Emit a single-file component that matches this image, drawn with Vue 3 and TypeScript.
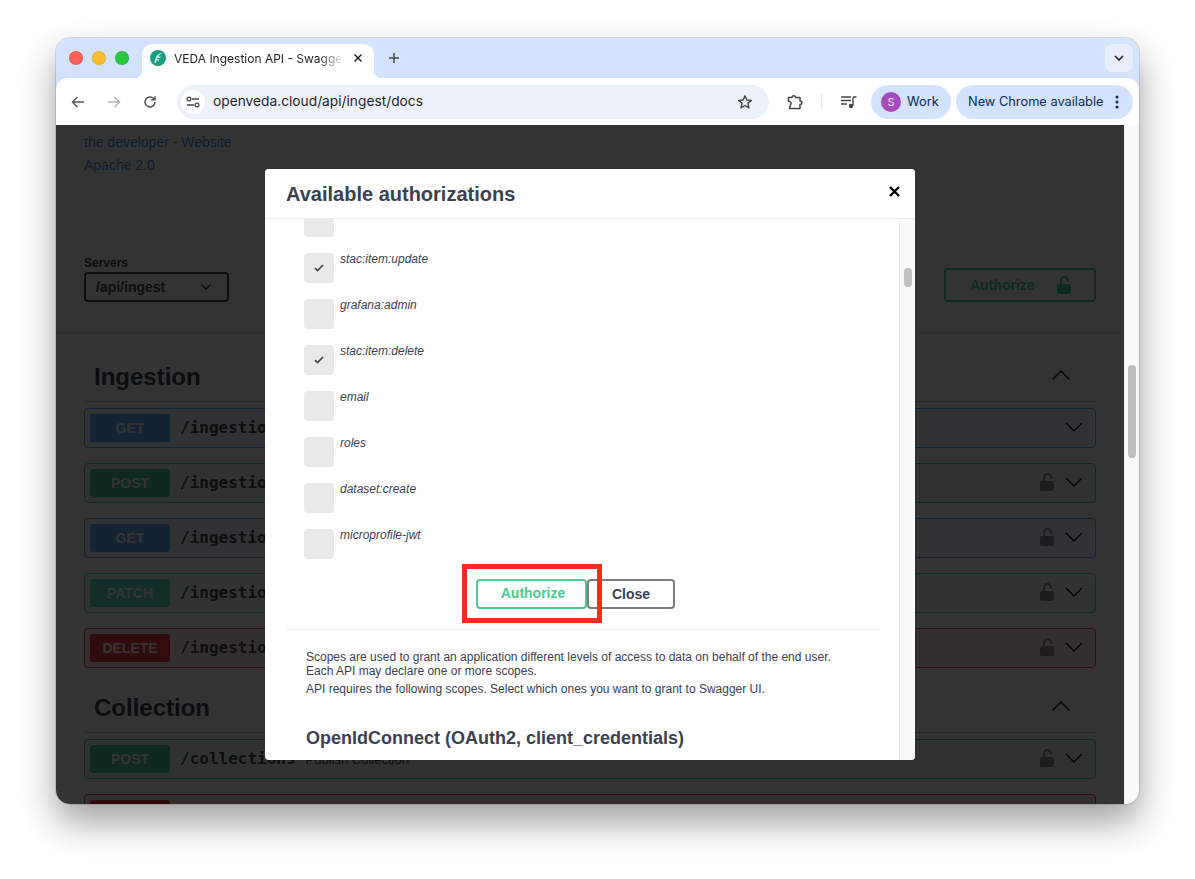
<script setup lang="ts">
interface Op { method: string; path: string; summary: string; lock: boolean }
const ingestion: Op[] = [
  { method: 'GET', path: '/ingestions', summary: 'List Ingestions', lock: false },
  { method: 'POST', path: '/ingestions', summary: 'Enqueue Ingestion', lock: true },
  { method: 'GET', path: '/ingestions/{id}', summary: 'Get Ingestion', lock: true },
  { method: 'PATCH', path: '/ingestions/{id}', summary: 'Update Ingestion', lock: true },
  { method: 'DELETE', path: '/ingestions/{id}', summary: 'Cancel Ingestion', lock: true },
]
const collection: Op[] = [
  { method: 'POST', path: '/collections', summary: 'Publish Collection', lock: true },
  { method: 'DELETE', path: '/collections/{id}', summary: 'Delete Collection', lock: true },
]
const scopes = [
  { name: '', on: false },
  { name: 'stac:item:update', on: true },
  { name: 'grafana:admin', on: false },
  { name: 'stac:item:delete', on: true },
  { name: 'email', on: false },
  { name: 'roles', on: false },
  { name: 'dataset:create', on: false },
  { name: 'microprofile-jwt', on: false },
]
const sections = [
  { title: 'Ingestion', ops: ingestion },
  { title: 'Collection', ops: collection },
]
</script>

<template>
  <div class="stage">
    <div class="window">
      <div class="tabstrip">
        <div class="lights">
          <span class="light red"></span><span class="light yellow"></span><span class="light green"></span>
        </div>
        <div class="tab">
          <svg class="fav" width="16" height="16" viewBox="0 0 16 16">
            <circle cx="8" cy="8" r="8" fill="#1b9c85" />
            <path d="M12.4 3C8.8 3.3 6.4 5.4 5.6 8.4L4.4 12.8L5.6 13L6.4 10.4H8.8L9.4 9.2H6.8L7.2 7.8H10.2L10.8 6.6H7.7C8.4 5.4 10 4.2 12.4 3Z" fill="#fff" />
          </svg>
          <span class="tabtitle">VEDA Ingestion API - Swagger UI</span>
          <svg class="tabclose" width="10" height="10" viewBox="0 0 10 10"><path d="M1.5 1.5L8.5 8.5M8.5 1.5L1.5 8.5" stroke="#1f1f1f" stroke-width="1.5" /></svg>
        </div>
        <svg class="plus" width="12" height="12" viewBox="0 0 12 12"><path d="M6 1V11M1 6H11" stroke="#444" stroke-width="1.4" /></svg>
        <div class="tabmenu">
          <svg width="10" height="6" viewBox="0 0 10 6"><path d="M1 1L5 5L9 1" fill="none" stroke="#1f1f1f" stroke-width="1.6" /></svg>
        </div>
      </div>

      <div class="toolbar">
        <svg class="nav" width="16" height="16" viewBox="0 0 16 16"><path d="M14 8H2.5M7.5 3L2.5 8L7.5 13" fill="none" stroke="#555" stroke-width="1.5" /></svg>
        <svg class="nav" width="16" height="16" viewBox="0 0 16 16"><path d="M2 8H13.5M8.5 3L13.5 8L8.5 13" fill="none" stroke="#b0b0b0" stroke-width="1.5" /></svg>
        <svg class="nav last" width="16" height="16" viewBox="0 0 16 16"><path d="M13 8A5 5 0 1 1 11.4 4.3L13 5.8M13 2.2V5.8H9.4" fill="none" stroke="#555" stroke-width="1.5" /></svg>
        <div class="address">
          <span class="siteicon">
            <svg width="14" height="12" viewBox="0 0 14 12"><path d="M6 3H13M1 9H8" stroke="#444" stroke-width="1.3" /><circle cx="3" cy="3" r="1.9" fill="none" stroke="#444" stroke-width="1.2" /><circle cx="11" cy="9" r="1.9" fill="none" stroke="#444" stroke-width="1.2" /></svg>
          </span>
          <span class="url">openveda.cloud/api/ingest/docs</span>
          <svg class="star" width="16" height="16" viewBox="0 0 16 16"><path d="M8 1.8L9.8 6L14.4 6.4L10.9 9.4L12 13.9L8 11.5L4 13.9L5.1 9.4L1.6 6.4L6.2 6Z" fill="none" stroke="#444" stroke-width="1.4" stroke-linejoin="round" /></svg>
        </div>
        <svg class="puzzle" width="18" height="18" viewBox="0 0 18 18"><path d="M2.5 4.5H6C6 2 9.5 2 9.5 4.5H14V8C16.5 8 16.5 11.5 14 11.5V15.5H3.5L4.5 12C6 10.5 4.5 8 2.5 8.2Z" fill="none" stroke="#444" stroke-width="1.5" stroke-linejoin="round" /></svg>
        <span class="sep"></span>
        <svg class="media" width="16" height="14" viewBox="0 0 16 14"><path d="M0 2H10M0 5.5H10M0 9H6" stroke="#444" stroke-width="1.3" /><path d="M12 2.2V10.5" stroke="#444" stroke-width="1.4" /><path d="M12 2H15.5" stroke="#444" stroke-width="1.5" /><circle cx="10" cy="11" r="2.2" fill="#444" /></svg>
        <div class="pill work"><span class="avatar">S</span><span class="pilltext">Work</span></div>
        <div class="pill update">
          <span class="pilltext">New Chrome available</span>
          <svg width="4" height="14" viewBox="0 0 4 14"><circle cx="2" cy="2" r="1.5" fill="#0b2a55" /><circle cx="2" cy="7" r="1.5" fill="#0b2a55" /><circle cx="2" cy="12" r="1.5" fill="#0b2a55" /></svg>
        </div>
      </div>

      <div class="viewport">
        <div class="page">
          <div class="info">
            <a>the developer - Website</a>
            <a>Apache 2.0</a>
          </div>
          <div class="schemes">
            <div>
              <div class="serverlabel">Servers</div>
              <div class="select">
                <span>/api/ingest</span>
                <svg width="12" height="8" viewBox="0 0 12 8"><path d="M1.5 1.5L6 6L10.5 1.5" fill="none" stroke="#3b4151" stroke-width="1.6" /></svg>
              </div>
            </div>
            <div class="authbtn">
              <span>Authorize</span>
              <svg width="14" height="18" viewBox="0 0 14 18"><path d="M4 8.5V4.5A3.5 3.5 0 0 1 11 4.5V5.6" fill="none" stroke="#49cc90" stroke-width="2" /><rect y="8" width="14" height="10" rx="2" fill="#49cc90" /></svg>
            </div>
          </div>
          <div class="ops">
            <section v-for="s in sections" :key="s.title" class="tag">
              <div class="taghead">
                <h3>{{ s.title }}</h3>
                <svg width="20" height="10" viewBox="0 0 20 10"><path d="M1.5 9.5L10 1L18.5 9.5" fill="none" stroke="#000" stroke-width="1.3" /></svg>
              </div>
              <div v-for="(op, i) in s.ops" :key="i" class="op" :class="op.method.toLowerCase()">
                <span class="badge">{{ op.method }}</span>
                <span class="path">{{ op.path }}</span>
                <span class="summary">{{ op.summary }}</span>
                <svg v-if="op.lock" class="oplock" width="14" height="18" viewBox="0 0 14 18"><path d="M4 8.5V4.5A3.5 3.5 0 0 1 11 4.5V5.6" fill="none" stroke="#000" stroke-width="2" /><rect y="8" width="14" height="10" rx="2" fill="#000" /></svg>
                <svg class="opchev" width="18" height="10" viewBox="0 0 18 10"><path d="M1 1L9 9L17 1" fill="none" stroke="#000" stroke-width="1.4" /></svg>
              </div>
            </section>
          </div>
          <div class="backdrop"></div>
        </div>
        <div class="pagebar"><span class="pagethumb"></span></div>

        <div class="modal">
          <div class="modalhead">
            <h3>Available authorizations</h3>
            <svg width="11" height="11" viewBox="0 0 11 11"><path d="M1 1L10 10M10 1L1 10" stroke="#000" stroke-width="2.4" /></svg>
          </div>
          <div class="modalbody">
            <div class="modalscroll">
              <div class="scopes">
                <div v-for="(sc, i) in scopes" :key="i" class="scope">
                  <span class="check">
                    <svg v-if="sc.on" width="10" height="8" viewBox="0 0 10 8"><path d="M1 4.2L3.6 6.6L9 1" fill="none" stroke="#41444e" stroke-width="1.7" /></svg>
                  </span>
                  <em>{{ sc.name }}</em>
                </div>
              </div>
              <div class="actions">
                <button class="btn go">Authorize</button>
                <button class="btn close">Close</button>
                <span class="highlight"></span>
              </div>
              <div class="about">
                <p>Scopes are used to grant an application different levels of access to data on behalf of the end user.<br />Each API may declare one or more scopes.</p>
                <p>API requires the following scopes. Select which ones you want to grant to Swagger UI.</p>
                <h4>OpenIdConnect (OAuth2, client_credentials)</h4>
              </div>
            </div>
            <div class="modalbar"><span class="modalthumb"></span></div>
          </div>
        </div>
      </div>
    </div>
  </div>
</template>

<style>
html, body { margin: 0; background: #fff; }
</style>

<style scoped>
.stage { width: 1195px; height: 879px; padding: 38px 56px 75px; box-sizing: border-box; background: #fff; overflow: hidden; }
.window { width: 1083px; height: 766px; border-radius: 14px; overflow: hidden; display: flex; flex-direction: column; background: #d3e3fd; box-shadow: 0 0 0 1px rgba(0,0,0,.12), 0 18px 36px rgba(0,0,0,.38); font-family: Inter, "Liberation Sans", sans-serif; }
.tabstrip { height: 40px; display: flex; align-items: flex-end; flex: none; }
.lights { display: flex; gap: 9px; width: 86px; padding: 0 0 13px 13px; box-sizing: border-box; }
.light { width: 14px; height: 14px; border-radius: 50%; box-sizing: border-box; border: 1px solid rgba(0,0,0,.08); }
.red { background: #ff5f57; }
.yellow { background: #febc2e; }
.green { background: #28c840; }
.tab { width: 232px; height: 34px; background: #fff; border-radius: 10px 10px 0 0; display: flex; align-items: center; padding: 0 11px 6px 8px; box-sizing: border-box; position: relative; z-index: 1; }
.tab::before, .tab::after { content: ""; position: absolute; bottom: 0; width: 8px; height: 8px; }
.tab::before { left: -8px; background: radial-gradient(circle at 0 0, transparent 8px, #fff 8.5px); }
.tab::after { right: -8px; background: radial-gradient(circle at 100% 0, transparent 8px, #fff 8.5px); }
.fav { flex: none; margin-right: 8px; }
.tabtitle { font-size: 12px; color: #1f1f1f; white-space: nowrap; overflow: hidden; width: 170px; flex: none; -webkit-mask-image: linear-gradient(90deg, #000 85%, transparent); mask-image: linear-gradient(90deg, #000 85%, transparent); }
.tabclose { margin-left: auto; flex: none; }
.plus { margin: 0 0 14px 14px; flex: none; }
.tabmenu { margin: 0 6px 6px auto; width: 28px; height: 28px; background: #e6eefc; border-radius: 8px; display: flex; align-items: center; justify-content: center; }
.toolbar { height: 47px; flex: none; background: #fff; border-radius: 12px 12px 0 0; display: flex; align-items: center; padding: 0 6px 0 14px; box-sizing: border-box; }
.nav { flex: none; margin-right: 20px; }
.nav.last { margin-right: 19px; }
.address { width: 592px; height: 34px; flex: none; background: #edf2fa; border-radius: 17px; display: flex; align-items: center; padding: 0 16px 0 4px; box-sizing: border-box; }
.siteicon { width: 24px; height: 24px; border-radius: 50%; background: #fff; display: flex; align-items: center; justify-content: center; flex: none; }
.url { margin-left: 8px; font-size: 13.75px; color: #1f1f1f; line-height: 16px; margin-top: -1px; }
.star { margin-left: auto; }
.puzzle { margin-left: 17px; flex: none; }
.sep { width: 1px; height: 15px; background: #d3e3fd; margin: 0 19px 0 17px; flex: none; }
.media { flex: none; margin-right: 14px; }
.pill { height: 34px; border-radius: 17px; background: #d3e3fd; display: flex; align-items: center; color: #0b2a55; font-size: 12.8px; box-sizing: border-box; flex: none; }
.pilltext { line-height: 16px; }
.work { width: 80px; padding-left: 10px; gap: 6px; }
.avatar { width: 20px; height: 20px; border-radius: 50%; background: #a64bbd; color: #f6e6fa; font-size: 11px; display: flex; align-items: center; justify-content: center; }
.update { width: 177px; margin-left: 5px; padding: 0 14px 0 12px; justify-content: space-between; }
.viewport { flex: 1; min-height: 0; display: flex; position: relative; overflow: hidden; }
.page { width: 1068px; flex: none; background: #fff; font-family: "Liberation Sans", Arial, sans-serif; color: #3b4151; position: relative; }
.backdrop { position: absolute; inset: 0; background: rgba(0,0,0,.8); }
.pagebar { flex: 1; background: #fafafa; border-left: 1px solid #eee; position: relative; display: flex; justify-content: center; }
.pagethumb { width: 8px; height: 93px; margin-top: 240px; background: #bdbdbd; border-radius: 4px; }
.info { padding: 8px 28px 0; height: 123px; box-sizing: border-box; display: flex; flex-direction: column; gap: 5px; }
.info a { font-size: 14px; line-height: 18px; color: #4990e2; }
.schemes { height: 84px; box-sizing: border-box; padding: 8px 28px 0; background: #fff; box-shadow: 0 1px 2px rgba(0,0,0,.15); display: flex; justify-content: space-between; align-items: flex-start; }
.serverlabel { font-size: 12px; font-weight: 700; line-height: 14px; margin: 0 0 2px; color: #3b4151; }
.select { width: 145px; height: 30px; box-sizing: border-box; border: 2px solid #41444e; border-radius: 4px; display: flex; align-items: center; justify-content: space-between; padding: 0 15px 0 10px; font-size: 14px; font-weight: 700; color: #3b4151; }
.authbtn { width: 152px; height: 34px; margin-top: 12px; box-sizing: border-box; border: 2px solid #49cc90; border-radius: 4px; display: flex; align-items: center; padding: 0 23px 0 24px; justify-content: space-between; font-size: 14px; font-weight: 700; color: #49cc90; }
.authbtn svg { margin-top: -1px; }
.ops { padding: 0 28px; }
.tag { display: block; }
.taghead { height: 70px; box-sizing: border-box; border-bottom: 1px solid rgba(59,65,81,.3); display: flex; justify-content: space-between; align-items: center; padding: 20px 25px 0 10px; }
.taghead h3 { margin: 0; font-size: 24px; font-weight: 700; color: #3b4151; }
.taghead svg { margin-top: -3px; }
.tag + .tag .taghead { height: 50px; padding-top: 0; padding-bottom: 0; }
.op { height: 40px; box-sizing: border-box; margin: 6px 0 15px; border: 1px solid; border-radius: 4px; display: flex; align-items: center; padding: 0 12px 0 5px; }
.op + .op { margin-top: 0; }
.get { background: rgba(97,175,254,.1); border-color: #61affe; }
.get .badge { background: #61affe; }
.post { background: rgba(73,204,144,.1); border-color: #49cc90; }
.post .badge { background: #49cc90; }
.patch { background: rgba(80,227,194,.1); border-color: #50e3c2; }
.patch .badge { background: #50e3c2; }
.delete { background: rgba(249,62,62,.1); border-color: #f93e3e; }
.delete .badge { background: #f93e3e; }
.badge { width: 80px; height: 28px; border-radius: 3px; display: flex; align-items: center; justify-content: center; font-size: 14px; font-weight: 700; color: #fff; flex: none; }
.path { margin-left: 10px; font-family: "DejaVu Sans Mono", monospace; font-size: 16px; line-height: 20px; font-weight: 700; color: #3b4151; }
.summary { margin-left: 10px; font-size: 13px; color: #3b4151; flex: 1; }
.oplock { margin: 0 11px 3px 0; flex: none; opacity: .4; }
.opchev { margin-bottom: 3px; flex: none; }
.modal { position: absolute; left: 209px; top: 44px; width: 650px; height: 591px; background: #fff; border-radius: 4px; display: flex; flex-direction: column; overflow: hidden; font-family: "Liberation Sans", Arial, sans-serif; color: #3b4151; }
.modalhead { height: 50px; flex: none; box-sizing: border-box; border-bottom: 1px solid #ebebeb; display: flex; align-items: center; justify-content: space-between; padding: 2px 15px 0 21px; position: relative; z-index: 1; background: #fff; }
.modalhead h3 { margin: 0; font-size: 20px; font-weight: 700; color: #3b4151; }
.modalhead svg { margin-top: -6px; }
.modalbody { flex: 1; min-height: 0; display: flex; }
.modalscroll { width: 634px; flex: none; overflow: hidden; }
.modalbar { flex: 1; border-left: 1px solid #ededed; background: #fafafa; display: flex; justify-content: center; }
.modalthumb { width: 8px; height: 19px; margin-top: 49px; border-radius: 4px; background: #c1c1c1; }
.scopes { margin-top: -12px; padding-left: 39px; display: flex; flex-direction: column; gap: 16px; }
.scope { display: flex; height: 30px; }
.check { width: 30px; height: 30px; flex: none; background: #e8e8e8; border-radius: 4px; display: flex; align-items: center; justify-content: center; }
.scope em { margin: -1px 0 0 6px; font-size: 12px; line-height: 14px; color: #3b4151; }
.actions { display: flex; justify-content: flex-start; padding: 20px 0 0 211px; height: 50px; box-sizing: border-box; position: relative; }
.btn { height: 30px; box-sizing: border-box; border-radius: 4px; background: #fff; font-family: "Liberation Sans", Arial, sans-serif; font-size: 14px; font-weight: 700; padding: 0; }
.go { width: 111px; border: 2px solid #49cc90; color: #49cc90; padding: 0 0 2px 3px; }
.close { width: 88px; border: 2px solid #7d7d7d; color: #3b4151; }
.highlight { position: absolute; left: 197px; top: 5px; width: 140px; height: 59px; box-sizing: border-box; border: 5px solid #ff2a1f; pointer-events: none; }
.about { margin: 20px 20px 0 21px; border-top: 1px solid #ebebeb; padding: 20px 20px 0; font-size: 12px; line-height: 14px; }
.about p { margin: 0 0 4px; }
.about h4 { margin: 31px 0 0; font-size: 18px; line-height: 22px; font-weight: 700; color: #3b4151; }
</style>
